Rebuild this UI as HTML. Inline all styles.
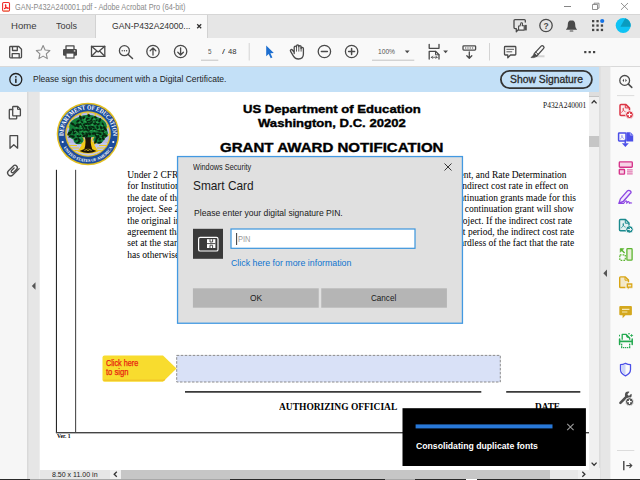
<!DOCTYPE html>
<html><head><meta charset="utf-8">
<style>
*{box-sizing:border-box;margin:0;padding:0}
html,body{width:640px;height:480px;overflow:hidden;background:#fff;font-family:"Liberation Sans",sans-serif;}
.a{position:absolute}
#root{position:relative;width:640px;height:480px;overflow:hidden;background:#fff}
.t{position:absolute;white-space:nowrap;line-height:1}
svg{position:absolute;overflow:visible}
.ic{fill:none;stroke:#4a4a4a;stroke-width:1.3;stroke-linecap:round;stroke-linejoin:round}
</style></head><body>
<div id="root">
<!-- title bar -->
<div class="a" style="left:0;top:0;width:640px;height:14px;background:#fff"></div>
<!-- tab bar -->
<div class="a" style="left:0;top:14px;width:640px;height:24px;background:#e6e6e6;border-top:1px solid #d6d6d6"></div>
<div class="a" style="left:95px;top:15px;width:112.5px;height:23px;background:#f9f9f9;border-left:1px solid #d2d2d2;border-right:1px solid #d2d2d2"></div>
<!-- toolbar -->
<div class="a" style="left:0;top:38px;width:640px;height:29px;background:#f9f9f9;border-bottom:1px solid #d9d9d9"></div>
<!-- info bar -->
<div class="a" style="left:0;top:67px;width:599.3px;height:25px;background:#c3e0f7"></div>
<svg style="left:499px;top:69px" width="96" height="22" viewBox="499 69 96 22"><rect x="500.9" y="70.8" width="91" height="17.4" rx="8.7" fill="none" stroke="#333" stroke-width="1.8"/></svg>
<!-- left panel -->
<div class="a" style="left:0;top:92px;width:27px;height:388px;background:#f6f6f6"></div>
<svg style="left:0;top:0" width="640" height="480" viewBox="0 0 640 480"><rect x="27" y="91.800" width="12.700" height="389" fill="#e6e6e6"/><rect x="27" y="91.800" width="1.500" height="389" fill="#d9d9d9"/></svg>
<!-- doc -->
<div class="a" id="doc" style="left:40px;top:92px;width:549px;height:378px;background:#fff"></div>
<!-- right scrollbar -->
<div class="a" style="left:589px;top:92px;width:10.5px;height:376px;background:#f0f0f0"></div>
<div class="a" style="left:589px;top:92px;width:10.3px;height:4.6px;background:#dedede;border-bottom:1px solid #c4c4c4"></div>
<div class="a" style="left:589px;top:136px;width:10.5px;height:11px;background:#c6c6c6"></div>
<!-- right strips -->
<svg style="left:0;top:0" width="640" height="480" viewBox="0 0 640 480"><rect x="599.300" y="66.700" width="11" height="414" fill="#e6e6e6"/><rect x="599.300" y="66.700" width="1.100" height="414" fill="#d6d6d6"/><rect x="610.300" y="66.700" width=".9" height="414" fill="#f0f0f0"/></svg>
<div class="a" style="left:611px;top:67px;width:29px;height:413px;background:#fafafa"></div>
<!-- bottom scrollbar -->
<div class="a" style="left:40px;top:470px;width:560px;height:10px;background:#e6e6e6"></div>
<div class="a" style="left:110px;top:470px;width:11px;height:9px;background:#f0f0f0"></div>
<div class="a" style="left:121px;top:470px;width:429px;height:9px;background:#c6c6c6"></div>
<div class="a" style="left:550px;top:470px;width:28px;height:9px;background:#e8e8e8"></div>
<div class="a" style="left:578px;top:470px;width:11px;height:9px;background:#f0f0f0"></div>
<div class="a" style="left:589px;top:468px;width:11px;height:12px;background:#f0f0f0"></div>
<!-- doc content -->
<svg style="left:0;top:0" width="640" height="480" viewBox="0 0 640 480">
 <rect x="55.9" y="169.8" width="1.1" height="263" fill="#262626"/>
 <rect x="75.05" y="169.8" width="1.1" height="263" fill="#4c4c4c"/>
 <rect x="55.9" y="432" width="533.1" height="1.4" fill="#444"/>
 <rect x="185" y="391.2" width="296.3" height="1.4" fill="#0a0a0a"/>
 <rect x="506.2" y="391.2" width="74.1" height="1.4" fill="#0a0a0a"/>
 <rect x="176.7" y="355.4" width="323.6" height="26.600" fill="#d9e1f7" stroke="#808080" stroke-width="0.9" stroke-dasharray="2.600 1.400"/>
 <g transform="translate(102.500,355.600)"><path d="M2 0H60.500L74 13L60.500 26.100H2Q0 26.100 0 24.100V2Q0 0 2 0Z" fill="#f8dc2e"/><path d="M1 24.600H61.200L62.300 23.600" stroke="#f2c628" stroke-width="1.500" fill="none"/></g>
</svg>
<div class="t" style="left:127.25px;top:171.14px;font-size:9.5px;font-family:'Liberation Serif',serif;color:#000">Under 2 CFR Part</div>
<div class="t" style="left:127.25px;top:182.49px;font-size:9.5px;font-family:'Liberation Serif',serif;color:#000">for Institutions of</div>
<div class="t" style="left:127.25px;top:193.84px;font-size:9.5px;font-family:'Liberation Serif',serif;color:#000">the date of the init</div>
<div class="t" style="left:127.25px;top:205.19px;font-size:9.5px;font-family:'Liberation Serif',serif;color:#000">project. See 2 CFR</div>
<div class="t" style="left:127.25px;top:216.54px;font-size:9.5px;font-family:'Liberation Serif',serif;color:#000">the original indirect</div>
<div class="t" style="left:127.25px;top:227.89px;font-size:9.5px;font-family:'Liberation Serif',serif;color:#000">agreement that is in</div>
<div class="t" style="left:127.25px;top:239.24px;font-size:9.5px;font-family:'Liberation Serif',serif;color:#000">set at the start of th</div>
<div class="t" style="left:127.25px;top:250.59px;font-size:9.5px;font-family:'Liberation Serif',serif;color:#000">has otherwise</div>
<div class="t" style="right:73.40px;top:171.14px;font-size:9.5px;font-family:'Liberation Serif',serif;color:#000">Identification and Assignment, and Rate Determination</div>
<div class="t" style="right:71.70px;top:182.49px;font-size:9.5px;font-family:'Liberation Serif',serif;color:#000">approves the indirect cost rate in effect on</div>
<div class="t" style="right:64.00px;top:193.84px;font-size:9.5px;font-family:'Liberation Serif',serif;color:#000">and any continuation grants made for this</div>
<div class="t" style="right:66.20px;top:205.19px;font-size:9.5px;font-family:'Liberation Serif',serif;color:#000">The GAN for a continuation grant will show</div>
<div class="t" style="right:68.00px;top:216.54px;font-size:9.5px;font-family:'Liberation Serif',serif;color:#000">entire project. If the indirect cost rate</div>
<div class="t" style="right:65.80px;top:227.89px;font-size:9.5px;font-family:'Liberation Serif',serif;color:#000">budget period, the indirect cost rate</div>
<div class="t" style="right:65.80px;top:239.24px;font-size:9.5px;font-family:'Liberation Serif',serif;color:#000">regardless of the fact that the rate</div>
<div class="t" id="title" style="left:14.50px;top:2.79px;font-size:8.4px;font-family:'Liberation Sans',sans-serif;font-weight:400;color:#8a8a8a;transform:scaleX(0.8782);transform-origin:0 0;">GAN-P432A240001.pdf - Adobe Acrobat Pro (64-bit)</div>
<div class="t" id="home" style="left:10.50px;top:21.42px;font-size:9.9px;font-family:'Liberation Sans',sans-serif;font-weight:400;color:#3a3a3a;transform:scaleX(0.9680);transform-origin:0 0;">Home</div>
<div class="t" id="tools" style="left:55.50px;top:21.42px;font-size:9.9px;font-family:'Liberation Sans',sans-serif;font-weight:400;color:#3a3a3a;transform:scaleX(0.9106);transform-origin:0 0;">Tools</div>
<div class="t" id="tabt" style="left:112.00px;top:22.33px;font-size:9.3px;font-family:'Liberation Sans',sans-serif;font-weight:400;color:#333;transform:scaleX(0.9261);transform-origin:0 0;">GAN-P432A24000...</div>
<div class="t" id="pg5" style="left:207.50px;top:47.83px;font-size:8px;font-family:'Liberation Sans',sans-serif;font-weight:400;color:#555;transform:scaleX(0.7860);transform-origin:0 0;">5</div>
<div class="t" id="pgs" style="left:222.00px;top:47.83px;font-size:8px;font-family:'Liberation Sans',sans-serif;font-weight:400;color:#333;transform:scaleX(1.3427);transform-origin:0 0;">/</div>
<div class="t" id="pg48" style="left:228.00px;top:47.83px;font-size:8px;font-family:'Liberation Sans',sans-serif;font-weight:400;color:#333;transform:scaleX(0.9544);transform-origin:0 0;">48</div>
<div class="t" id="z100" style="left:377.50px;top:47.83px;font-size:8px;font-family:'Liberation Sans',sans-serif;font-weight:400;color:#555;transform:scaleX(0.8305);transform-origin:0 0;">100%</div>
<div class="t" id="info" style="left:32.50px;top:75.48px;font-size:9px;font-family:'Liberation Sans',sans-serif;font-weight:400;color:#1f1f1f;transform:scaleX(0.9480);transform-origin:0 0;">Please sign this document with a Digital Certificate.</div>
<div class="t" id="showsig" style="left:509.50px;top:74.53px;font-size:10px;font-family:'Liberation Sans',sans-serif;font-weight:400;color:#2a2a2a;transform:scaleX(1.0339);transform-origin:0 0;-webkit-text-stroke:0.3px #2a2a2a;">Show Signature</div>
<div class="t" id="h1" style="left:242.75px;top:104.01px;font-size:10.5px;font-family:'Liberation Sans',sans-serif;font-weight:700;color:#000;transform:scaleX(1.2486);transform-origin:0 0;-webkit-text-stroke:0.35px #000;">US Department of Education</div>
<div class="t" id="h2" style="left:257.75px;top:117.71px;font-size:10.5px;font-family:'Liberation Sans',sans-serif;font-weight:700;color:#000;transform:scaleX(1.2454);transform-origin:0 0;-webkit-text-stroke:0.35px #000;">Washington, D.C. 20202</div>
<div class="t" id="h3" style="left:219.70px;top:141.99px;font-size:12.3px;font-family:'Liberation Sans',sans-serif;font-weight:700;color:#000;transform:scaleX(1.2254);transform-origin:0 0;-webkit-text-stroke:0.35px #000;">GRANT AWARD NOTIFICATION</div>
<div class="t" id="pnum" style="left:543.25px;top:101.00px;font-size:8.6px;font-family:'Liberation Serif',serif;font-weight:400;color:#111;transform:scaleX(0.8687);transform-origin:0 0;">P432A240001</div>
<div class="t" id="auth" style="left:279.25px;top:403.13px;font-size:9.4px;font-family:'Liberation Serif',serif;font-weight:700;color:#000;transform:scaleX(1.0111);transform-origin:0 0;">AUTHORIZING OFFICIAL</div>
<div class="t" id="date" style="left:535.30px;top:403.13px;font-size:9.4px;font-family:'Liberation Serif',serif;font-weight:700;color:#000;transform:scaleX(0.9858);transform-origin:0 0;">DATE</div>
<div class="t" id="ver" style="left:56.80px;top:433.11px;font-size:6.2px;font-family:'Liberation Serif',serif;font-weight:700;color:#000;transform:scaleX(0.8991);transform-origin:0 0;">Ver. 1</div>
<div class="t" id="click1" style="left:105.70px;top:358.72px;font-size:8.6px;font-family:'Liberation Sans',sans-serif;font-weight:400;color:#e81c10;transform:scaleX(0.8451);transform-origin:0 0;-webkit-text-stroke:0.25px #e81c10;">Click here</div>
<div class="t" id="click2" style="left:105.70px;top:367.72px;font-size:8.6px;font-family:'Liberation Sans',sans-serif;font-weight:400;color:#e81c10;transform:scaleX(0.8883);transform-origin:0 0;-webkit-text-stroke:0.25px #e81c10;">to sign</div>
<div class="t" id="dims" style="left:51.75px;top:470.83px;font-size:8px;font-family:'Liberation Sans',sans-serif;font-weight:400;color:#222;transform:scaleX(0.8778);transform-origin:0 0;">8.50 x 11.00 in</div>
<!-- window controls -->
<svg style="left:0;top:0" width="640" height="14" viewBox="0 0 640 14">
 <path d="M564 6.5h7" stroke="#777" stroke-width="0.9" fill="none"/>
 <path d="M592.5 4.5h5v5h-5zM594 4.5v-1.3h5v5h-1.5" stroke="#777" stroke-width="0.8" fill="none"/>
 <path d="M621 3l7 6.8M628 3l-7 6.8" stroke="#777" stroke-width="0.8" fill="none"/>
 <!-- app icon -->
 <rect x="2.6" y="2.5" width="6.9" height="8.6" rx="1.1" fill="#fff" stroke="#ee2e2e" stroke-width="1.1"/>
 <path d="M3.8 10.9h4.600" stroke="#e8a060" stroke-width=".8"/>
 <path d="M4 8.900c1.300-.6 2-2.500 2-3.800c0-.7-.7-.7-.7 0c0 1.400 1.300 3 2.700 3.300c.7.100.7-.6 0-.6c-1.400 0-2.900.5-4 1.100z" fill="#f41a1a" stroke="#f41a1a" stroke-width=".9"/>
</svg>
<!-- tab close -->
<svg style="left:197px;top:23.8px" width="4.4" height="4.4" viewBox="0 0 4.4 4.4"><path d="M0.2 0.2L4.2 4.2M4.2 0.2L0.2 4.2" stroke="#333" stroke-width="1.25"/></svg>
<!-- tabbar right icons -->
<svg style="left:0;top:14px" width="640" height="24" viewBox="0 14 640 24">
 <!-- feedback -->
 <g class="ic" stroke-width="1.300" stroke="#505050"><path d="M525.300 22v-1.400q0-1-1-1h-9.300q-1 0-1 1v7q0 1 1 1h1.300v3.200l3-3.200"/><path d="M518.600 26h1.400l1.100-3.300q1.500-.2 1.400 1.300l-.3 1.800h2v4.300h-5.600z" fill="#f2f2f2" stroke-width="1.100"/></g>
 <rect x="524.500" y="24.900" width="2.300" height="5.500" fill="#505050"/>
 <!-- help -->
 <circle cx="546" cy="25.500" r="6.200" class="ic" stroke-width="1.200"/>
 <text x="546" y="28.600" font-size="8.500" font-weight="700" text-anchor="middle" fill="#4a4a4a" font-family="'Liberation Sans',sans-serif">?</text>
 <!-- bell -->
 <path d="M571.500 20.200c-2.600 0-3.700 2-3.700 4.200c0 2.600-.7 3.800-1.700 4.800v.6h10.800v-.6c-1-1-1.700-2.200-1.700-4.800c0-2.200-1.100-4.200-3.700-4.200z" fill="#4a4a4a"/>
 <path d="M570.200 31h2.600" stroke="#4a4a4a" stroke-width="1.200" stroke-linecap="round"/>
 <!-- grid -->
 <g fill="#444"><rect x="592" y="20" width="2.300" height="2.300"/><rect x="596.400" y="20" width="2.300" height="2.300"/>
 <rect x="592" y="24.400" width="2.300" height="2.300"/><rect x="596.400" y="24.400" width="2.300" height="2.300"/><rect x="600.800" y="24.400" width="2.300" height="2.300"/>
 <rect x="592" y="28.800" width="2.300" height="2.300"/><rect x="596.400" y="28.800" width="2.300" height="2.300"/><rect x="600.800" y="28.800" width="2.300" height="2.300"/></g>
 <circle cx="602.200" cy="21" r="2.100" fill="#1473e6"/>
 <!-- avatar -->
 <circle cx="623.200" cy="25.500" r="7.500" fill="#0fc3f4"/>
 <path d="M620.4 26.8 L625.2 18.3 A7.5 7.5 0 0 1 630.6 26.8 Z" fill="#0a9bbf"/>
</svg>
<!-- toolbar icons -->
<svg style="left:0;top:38px" width="640" height="29" viewBox="0 38 640 29">
 <!-- save -->
 <g class="ic"><path d="M10.500 46.500h8.300l2.700 2.700v7.800q0 .8-.8.800h-10.200q-.8 0-.8-.8v-9.700q0-.8.800-.8z"/><path d="M12.500 46.800v3.700h4.800v-3.700"/><path d="M12.200 57.600v-4h7v4"/></g>
 <!-- star -->
 <path d="M43.100 45.500l2 4.500l4.800.500l-3.600 3.300l1 4.800l-4.200-2.500l-4.200 2.500l1-4.800l-3.600-3.300l4.800-.5z" fill="none" stroke="#8c8c8c" stroke-width="1.100" stroke-linejoin="round"/>
 <!-- print -->
 <g><path d="M66 49v-3.100h8v3.100" class="ic"/><rect x="63" y="49" width="14" height="6.800" rx="1.200" fill="#4a4a4a"/><rect x="66" y="53" width="8" height="5" fill="#f9f9f9" stroke="#4a4a4a" stroke-width="1.200"/><rect x="73.800" y="50.300" width="1.500" height="1.200" fill="#f9f9f9"/></g>
 <!-- mail -->
 <g class="ic" stroke-width="1.050" stroke="#555"><rect x="91.500" y="46.300" width="13.300" height="10"/><path d="M91.500 46.300l6.650 5.600l6.650-5.600M91.500 56.300l5-5M104.800 56.300l-5-5"/></g>
 <!-- find -->
 <g class="ic"><circle cx="124.400" cy="50.700" r="5"/><path d="M128.200 54.500l4.300 4" stroke-width="1.500"/></g>
 <g fill="#4a4a4a"><circle cx="122.200" cy="50.700" r=".7"/><circle cx="124.400" cy="50.700" r=".7"/><circle cx="126.600" cy="50.700" r=".7"/></g>
 <!-- up -->
 <g class="ic"><circle cx="153" cy="51.500" r="6.200"/><path d="M153 55v-6.800M150.200 50.800l2.800-2.800l2.800 2.800"/></g>
 <!-- down -->
 <g class="ic"><circle cx="180.600" cy="51.500" r="6.200"/><path d="M180.600 48v6.800M177.800 52.200l2.800 2.800l2.800-2.800"/></g>
 <!-- page underline -->
 <path d="M201 60.200h17.300" stroke="#c2c2c2" stroke-width="1"/>
 <path d="M249.200 43v17.500" stroke="#d4d4d4" stroke-width="1"/>
 <!-- cursor -->
 <path d="M266.200 45.400v10.800l2.500-2.200l2 4.300l1.700-.8l-2-4.200l3.400-.3z" fill="#1e6fd0"/>
 <!-- hand -->
 <g class="ic" stroke-width="1.100"><path d="M294.200 53.600V47.200a1.150 1.150 0 0 1 2.300 0V46a1.150 1.150 0 0 1 2.300 0V46.700a1.150 1.150 0 0 1 2.300 0V48.600a1.150 1.150 0 0 1 2.300 0V54q0 5-5 5q-3.200 0-4.800-2.700l-3-5q-.6-1 .2-1.600t1.600 .3l1.800 2.400"/><path d="M296.500 47.200v4M298.800 46.200v5M301.100 47v4.200" stroke-width=".9"/></g>
 <!-- zoom out -->
 <g class="ic"><circle cx="324.400" cy="51.500" r="6.200"/><path d="M321.400 51.500h6" stroke-width="1.500"/></g>
 <!-- zoom in -->
 <g class="ic"><circle cx="351.600" cy="51.500" r="6.200"/><path d="M348.600 51.500h6M351.600 48.500v6" stroke-width="1.500"/></g>
 <!-- zoom underline + caret -->
 <path d="M372 60.200h42.300" stroke="#c2c2c2" stroke-width="1"/>
 <path d="M404.800 50.600h4.800l-2.400 2.600z" fill="#4a4a4a"/>
 <!-- fit page -->
 <g class="ic" stroke-width="1.300"><path d="M429.200 44.300v4h9.800v-4"/><path d="M429.200 59v-7.700h6.300l3.500 3.500v4.200"/><path d="M435.500 51.300v3.500h3.500" stroke-width="1"/><path d="M431.500 57.300h5.500M431.500 57.300l1.200-1.200M431.500 57.300l1.200 1.200M437 57.300l-1.200-1.200M437 57.300l-1.200 1.200" stroke-width=".8"/></g>
 <path d="M443.200 50.600h4.800l-2.400 2.600z" fill="#4a4a4a"/>
 <!-- keyboard down -->
 <g class="ic"><rect x="463" y="45.800" width="12.600" height="4.300" rx=".8"/><path d="M469.300 52v6M466.800 55.700l2.500 2.500l2.500-2.500"/></g>
 <g fill="#4a4a4a"><rect x="465" y="47.500" width="1.300" height="1"/><rect x="467.300" y="47.500" width="1.300" height="1"/><rect x="469.600" y="47.500" width="1.300" height="1"/><rect x="471.900" y="47.500" width="1.300" height="1"/></g>
 <path d="M489.500 43v17.500" stroke="#d4d4d4" stroke-width="1"/>
 <!-- comment -->
 <g class="ic" stroke-width="1.200"><path d="M505.300 46.500h9.700q.8 0 .8.800v6.900q0 .8-.8.800h-4.500l-2.700 2.700v-2.700h-2.500q-.8 0-.8-.8v-6.900q0-.8.800-.8z"/><path d="M506.800 49.300h6.800M506.800 51.800h5" stroke-width=".9"/></g>
 <!-- highlighter -->
 <path d="M534.800 56.300h9.700" stroke="#d2d2d2" stroke-width="2"/>
 <g class="ic" stroke-width="1.150"><path d="M536.750 55.950L534.250 53.650L541.150 46.100q1-1.100 2.250 .050t.25 2.250z" fill="#f9f9f9"/><path d="M538.250 54.350L535.750 52.050" stroke-width="1"/><path d="M536.750 55.950L534.250 53.650L533 55.600L531 57.600H533.800L535.200 57.100z" fill="#4a4a4a" stroke-width=".7"/></g>
 <!-- more -->
 <g fill="#444"><rect x="584.200" y="51" width="2.200" height="2.200"/><rect x="588.600" y="51" width="2.200" height="2.200"/><rect x="593" y="51" width="2.200" height="2.200"/></g>
</svg>
<!-- info icon -->
<svg style="left:0;top:67px" width="40" height="25" viewBox="0 67 40 25">
 <circle cx="15.800" cy="79.500" r="6" fill="none" stroke="#222" stroke-width="1.300"/>
 <rect x="15.100" y="78.600" width="1.500" height="4.300" fill="#222"/><rect x="15.100" y="76.100" width="1.500" height="1.500" fill="#222"/>
</svg>
<!-- left panel icons -->
<svg style="left:0;top:92px" width="40" height="388" viewBox="0 92 40 388">
 <g class="ic" stroke-width="1.250"><path d="M12.700 109.500h-2.700q-.7 0-.7.700v8q0 .7.700.7h6q.7 0 .7-.7v-2"/><path d="M13.400 106.500h4.300l2.700 2.700v6q0 .7-.7.700h-6.300q-.7 0-.7-.7v-8q0-.7.700-.7z"/><path d="M17.500 106.700v2.700h2.700" stroke-width="1"/></g>
 <path d="M10 135.600h7.600v12.600l-3.800-3.400l-3.800 3.400z" class="ic" stroke-width="1.300"/>
 <path d="M5.4 3L-3.6 3A3 3 0 0 1 -3.6 -3L3.2 -3A2.3 2.3 0 0 1 3.2 1.6L-1.3 1.6A1.3 1.3 0 0 1 -1.3 -1L2.2 -1" class="ic" stroke-width="1.3" transform="translate(13.2,170.3) rotate(-45)"/>
 <path d="M31.800 286l3.700-3.700v7.400z" fill="#555"/>
</svg>
<!-- scrollbar arrows -->
<svg style="left:580px;top:92px" width="30" height="388" viewBox="580 92 30 388">
 <path d="M591.600 103.400l2.500-2.600l2.500 2.600" fill="none" stroke="#333" stroke-width="1.300"/>
 <path d="M591.600 462.600l2.500 2.600l2.500-2.600" fill="none" stroke="#333" stroke-width="1.300"/>
 <path d="M582.300 471.800l2.600 2.500l-2.600 2.500" fill="none" stroke="#333" stroke-width="1.300"/>
 <path d="M603.300 273.200l3.700-3.700v7.400z" fill="#555"/>
</svg>
<svg style="left:110px;top:468px" width="12" height="12" viewBox="110 468 12 12"><path d="M116.800 471.800l-2.600 2.500l2.600 2.500" fill="none" stroke="#333" stroke-width="1.300"/></svg>
<!-- right panel icons -->
<svg style="left:611px;top:67px" width="29" height="413" viewBox="611 67 29 413">
 <!-- search -->
 <g class="ic" stroke="#444"><circle cx="624.700" cy="80.400" r="4.900"/><path d="M628.400 84.100l3.400 3.300" stroke-width="1.500"/></g>
 <path d="M624 78.800l-1.500 1.600l1.500 1.600zM625.400 78.800l1.500 1.600l-1.500 1.600z" fill="#444"/>
 <path d="M617 95.600h17.300" stroke="#dcdcdc" stroke-width="1"/>
 <!-- create pdf (red) -->
 <g fill="none" stroke="#dc3545" stroke-width="1.500" stroke-linejoin="round"><path d="M627 115.400h-6q-1 0-1-1v-8.800q0-1 1-1h5l3.500 3.500v2.300" fill="#fcecee"/><path d="M625.300 104.400v3.500h3.500" stroke-width="1"/><path d="M621.300 112.500c1.300-.6 2.300-2.600 2.300-3.900c0-.6-.7-.6-.7 0c0 1.400 1.300 2.900 2.700 3.300" stroke-width=".8"/></g>
 <circle cx="629.500" cy="114.700" r="3.900" fill="#dc3545" stroke="#fafafa" stroke-width=".9"/>
 <path d="M627.300 114.700h4.400M629.500 112.500v4.400" stroke="#fff" stroke-width="1.200"/>
 <!-- export pdf (blue) -->
 <g><path d="M619.200 132.900h6.200q.6 0 .6.600v6.800q0 .6-.6.600h-6.200q-.6 0-.6-.6v-6.800q0-.6.600-.6z" fill="#fafafa" stroke="#4b4fe8" stroke-width="1.500"/>
 <path d="M620.300 139c1.100-.5 1.900-2.200 1.900-3.300c0-.5-.5-.5-.5 0c0 1.200 1.100 2.400 2.200 2.800" fill="none" stroke="#8a8df0" stroke-width=".8"/>
 <path d="M626.600 132.200h3.800l2.800 2.800v6.600h-6.600z" fill="#4b4fe8"/><path d="M630.300 132.300v2.800h2.800" fill="none" stroke="#c9cbfa" stroke-width=".7"/>
 <path d="M625.300 139.500v4" stroke="#4b4fe8" stroke-width="1.600"/><path d="M625.300 139.500v2" stroke="#fafafa" stroke-width="2.800" opacity="0"/>
 <path d="M621.900 143.200h6.900l-3.450 3.900z" fill="#4b4fe8"/></g>
 <!-- organize (pink) -->
 <g stroke="#d6338a" stroke-width="1.35" fill="none"><rect x="619.3" y="161.9" width="13" height="5.3" rx=".8" fill="#f6d3e6"/><rect x="619.3" y="169.5" width="5.2" height="4.6" rx=".6" fill="#f6d3e6"/><path d="M627 169.9h5.7M627 171.9h5.7M627 173.9h5.7" stroke-width=".85"/></g>
 <!-- sign (purple) -->
 <g fill="none" stroke="#8c45e2" stroke-width="1.35" stroke-linecap="round" stroke-linejoin="round"><path d="M619 203.200L620.400 198.900L627.200 191.100Q628.900 189.600 630.400 191.100T630 193.700L623.200 201.500Z" fill="#f1e8fc"/><path d="M619 203.300h4.800q2-3.300 2.700-2.300t.2 2.200q1.500-2.200 2.200-1.400t.4 1.500q1-.8 2.300-.3" stroke-width="1.150"/></g>
 <!-- export (teal) -->
 <g fill="none" stroke="#1b8a8e" stroke-width="1.250" stroke-linejoin="round"><path d="M626 230.700h-5.500q-1 0-1-1v-9.200q0-1 1-1h5l3.500 3.500v3" fill="#e3f1f1" stroke-width="1.4"/><path d="M625.300 219.700v3.500h3.500" stroke-width="1"/><path d="M621.300 227.800c1.300-.6 2.300-2.600 2.300-3.900c0-.6-.7-.6-.7 0c0 1.400 1.300 2.900 2.700 3.300" stroke-width=".8"/></g>
 <circle cx="629.500" cy="229.400" r="3.700" fill="#1b8a8e" stroke="#fafafa" stroke-width=".8"/>
 <path d="M627.400 229.400h3.800M629.700 227.700l1.700 1.700l-1.700 1.700" stroke="#fff" stroke-width="1" fill="none"/>
 <!-- compress (green) -->
 <g fill="none" stroke="#5cb531" stroke-width="1.300"><rect x="626.900" y="248.700" width="5.200" height="11.500" rx=".8" fill="#e9efd9"/><path d="M619.800 254.800h5.500v5.500h-5.500z" stroke-dasharray="1.700 1.100" stroke-width="1.200"/><path d="M624.600 253l-4-4" stroke-width="1.300"/><path d="M620.200 252.300v-3.700h3.700z" fill="#5cb531" stroke-width=".6"/></g>
 <!-- comment on file (gold) -->
 <g fill="none" stroke="#d9a514" stroke-width="1.400" stroke-linejoin="round"><path d="M625.500 287.500h-5q-.8 0-.8-.8v-9q0-.8.800-.8h4.800l3.200 3.200v2.500" fill="#f3e8c8"/><path d="M625 277v3.200h3.200" stroke-width="1"/></g>
 <path d="M627 282.900h5q.8 0 .8.800v3.700q0 .8-.8.800h-2.800l-1.700 1.700v-1.700h-.5q-.8 0-.8-.8v-3.700q0-.8.800-.8z" fill="#d9a514" stroke="#fafafa" stroke-width=".7"/>
 <rect x="628" y="284.700" width="3.200" height="1.800" fill="#f3e8c8"/>
 <!-- comment (gold filled) -->
 <path d="M620.300 306h10.600q1 0 1 1v7.300q0 1-1 1h-5.400l-2.900 3v-3h-2.300q-1 0-1-1v-7.300q0-1 1-1z" fill="#d4a81e"/>
 <path d="M622 309.300h7.400M622 312h5.400" stroke="#f6e7b4" stroke-width="1.200"/>
 <!-- scan (green) -->
 <g fill="none" stroke="#22a94f" stroke-width="1.300" stroke-linejoin="round"><path d="M622.200 339.800v-5.400h4l3.500 3.500v1.900"/><path d="M626 334.600q0 3.500 3.500 3.500z" fill="#22a94f" stroke-width=".6"/><path d="M631.600 334v3M630.100 335.500h3M629 333v1.400M628.300 333.700h1.400" stroke-width=".8"/><path d="M619.500 334.800v1.600" stroke-width="1"/></g>
 <path d="M619.600 339v5.500M632.200 339v5.500" stroke="#22a94f" stroke-width="1.500" stroke-linecap="round"/>
 <path d="M619.600 341.400h12.600" stroke="#22a94f" stroke-width="1.700"/>
 <g fill="#22a94f"><rect x="621" y="343.700" width="1.300" height="1.300"/><rect x="621" y="345.500" width="1.300" height="1.300"/><rect x="629" y="343.700" width="1.300" height="1.300"/><rect x="629" y="345.500" width="1.300" height="1.300"/>
 <rect x="621" y="347" width="1.300" height="1.200"/><rect x="623" y="347" width="1.300" height="1.200"/><rect x="625" y="347" width="1.300" height="1.200"/><rect x="627" y="347" width="1.300" height="1.200"/><rect x="629" y="347" width="1.300" height="1.200"/></g>
 <!-- shield (blue) -->
 <path d="M625.500 363.300q2.500 1.300 5 1.300v5q0 4-5 6.300q-5-2.300-5-6.300v-5q2.500 0 5-1.300z" fill="#fafafa" stroke="#4b4fe8" stroke-width="1.300" stroke-linejoin="round"/>
 <path d="M625.500 364.200v10.800q-4.200-2-4.200-5.400v-4.300q2.200 0 4.200-1.100z" fill="#cdd5f8"/>
 <!-- wrench -->
 <path d="M620.400 402.800l5.800-5.800" stroke="#505050" stroke-width="2.500" stroke-linecap="round" fill="none"/>
 <circle cx="628.300" cy="394.900" r="3.400" fill="#505050"/>
 <path d="M628.300 394.900l1.200-1.200l4 .2l-4.200-4.200l.2 4z" fill="#fafafa" transform="rotate(0 628.300 394.900)"/>
 <path d="M628.100 395.100l5-5" stroke="#fafafa" stroke-width="2.300"/>
 <circle cx="629.500" cy="401.700" r="4" fill="#505050" stroke="#fafafa" stroke-width=".9"/>
 <path d="M627.300 401.700h4.400M629.500 399.500v4.400" stroke="#fff" stroke-width="1.200"/>
 <!-- bottom -->
 <path d="M617 450.500h17.300" stroke="#dcdcdc" stroke-width="1"/>
 <path d="M623.800 461v9.300" stroke="#444" stroke-width="1.400"/>
 <path d="M626.300 465.600h5.500M629.500 463.300l2.300 2.300l-2.300 2.300" stroke="#444" stroke-width="1.100" fill="none"/>
</svg>
<!-- bottom edge line -->
<div class="a" style="left:0;top:479px;width:640px;height:1px;background:#2a2a2a"></div>
<div class="a" style="left:30px;top:479px;width:200px;height:1px;background:#a8a8a8"></div>
<div class="a" style="left:385px;top:479px;width:30px;height:1px;background:#a8a8a8"></div>
<div class="a" style="left:466px;top:479px;width:11px;height:1px;background:#fff"></div>
<!-- seal -->
<svg style="left:56px;top:102px" width="64" height="64" viewBox="-32 -32 64 64">
 <defs>
  <path id="arcT" d="M-24.47 2.57 A24.6 24.6 0 1 1 24.47 2.57"/>
  <path id="arcB" d="M-24.72 13.15 A28.0 28.0 0 0 0 24.72 13.15"/>
  <clipPath id="inner"><circle r="21.500"/></clipPath>
 </defs>
 <circle r="31.300" fill="#e3bf1f"/>
 <circle r="29.800" fill="#1c4c9c"/>
 <circle r="22.800" fill="#e3bf1f"/>
 <circle r="21.500" fill="#b7bbe6"/>
 <g clip-path="url(#inner)">
  <g stroke="#ecca22" stroke-width="1.600">
   <path d="M0 14L-24 8M0 14L-23 -1M0 14L-22 -10M0 14L-16 -18M0 14L-8 -22M0 14L0 -24M0 14L8 -22M0 14L16 -18M0 14L22 -10M0 14L23 -1M0 14L24 8"/>
  </g>
  <path d="M-24 9.500 Q-12 7 -4 12 L4 12 Q12 7 24 9.500 L24 24 L-24 24Z" fill="#c3c7ee"/>
  <path d="M-22 11.500h11M-23 14h14M-22 16.500h13M11 11.500h11M9 14h14M9 16.500h13" stroke="#ecca22" stroke-width="1.100"/>
  <path d="M-10.500 17.500 L-3 6 L3 6 L10.500 17.500 Q0 22 -10.500 17.500Z" fill="#f4c915"/>
  <path d="M-8.500 17 Q0 12.500 8.500 17 Q0 21 -8.500 17Z" fill="#1a1408"/>
  <path d="M-3.500 16.500q1.700-2 3.500 0q1.800-2 3.500 0" stroke="#e9c81e" stroke-width=".9" fill="none"/>
 </g>
 <path d="M-3.800 15.500 Q-1.200 8 -3.500 2 L-9 -4 L-6 -4 L-2 -.5 L-1 -6 L1.500 -6 L1.500 0 L6 -4 L8.500 -3 L3.200 2.500 Q1.800 8 4.300 15.500 Q0 14 -3.800 15.500Z" fill="#20130a"/>
 <g fill="#13803a">
  <ellipse cx="0" cy="-7.500" rx="18.800" ry="10.800"/>
  <ellipse cx="-12.500" cy="-1" rx="7.500" ry="6.800"/>
  <ellipse cx="12.500" cy="-1" rx="7.500" ry="6.800"/>
  <ellipse cx="-9.500" cy="6" rx="5" ry="4.200"/>
  <ellipse cx="10.500" cy="5.500" rx="5.200" ry="4"/>
  <ellipse cx="0" cy="-13" rx="11.500" ry="6.300"/>
 </g>
 <g fill="#06180b" opacity=".85"><ellipse cx="0.8" cy="-18.5" rx="1.5" ry="1.3" transform="rotate(27 0.8 -18.5)"/><ellipse cx="-7.5" cy="-16.4" rx="2.5" ry="1.2" transform="rotate(70 -7.5 -16.4)"/><ellipse cx="-4.2" cy="-16.4" rx="1.6" ry="1.2" transform="rotate(-30 -4.2 -16.4)"/><ellipse cx="-0.8" cy="-15.3" rx="2.5" ry="1.0" transform="rotate(-4 -0.8 -15.3)"/><ellipse cx="4.3" cy="-15.6" rx="1.7" ry="0.9" transform="rotate(-53 4.3 -15.6)"/><ellipse cx="7.5" cy="-16.6" rx="1.6" ry="1.0" transform="rotate(20 7.5 -16.6)"/><ellipse cx="-10.0" cy="-12.9" rx="2.1" ry="1.0" transform="rotate(-36 -10.0 -12.9)"/><ellipse cx="-6.3" cy="-12.3" rx="1.7" ry="0.9" transform="rotate(44 -6.3 -12.3)"/><ellipse cx="-1.1" cy="-13.5" rx="2.4" ry="1.1" transform="rotate(63 -1.1 -13.5)"/><ellipse cx="1.1" cy="-12.5" rx="1.8" ry="0.9" transform="rotate(14 1.1 -12.5)"/><ellipse cx="4.3" cy="-13.4" rx="2.4" ry="1.1" transform="rotate(8 4.3 -13.4)"/><ellipse cx="7.9" cy="-13.5" rx="2.1" ry="0.9" transform="rotate(-18 7.9 -13.5)"/><ellipse cx="11.7" cy="-13.7" rx="2.4" ry="1.2" transform="rotate(-67 11.7 -13.7)"/><ellipse cx="-15.4" cy="-9.9" rx="2.4" ry="1.2" transform="rotate(33 -15.4 -9.9)"/><ellipse cx="-10.4" cy="-9.3" rx="2.2" ry="1.3" transform="rotate(-21 -10.4 -9.3)"/><ellipse cx="-7.6" cy="-9.5" rx="2.1" ry="1.1" transform="rotate(51 -7.6 -9.5)"/><ellipse cx="-3.0" cy="-9.6" rx="2.2" ry="1.1" transform="rotate(-16 -3.0 -9.6)"/><ellipse cx="-0.2" cy="-10.4" rx="2.0" ry="1.1" transform="rotate(28 -0.2 -10.4)"/><ellipse cx="2.9" cy="-10.8" rx="2.2" ry="0.9" transform="rotate(-28 2.9 -10.8)"/><ellipse cx="7.3" cy="-10.5" rx="2.3" ry="1.3" transform="rotate(-10 7.3 -10.5)"/><ellipse cx="10.4" cy="-9.9" rx="1.6" ry="1.0" transform="rotate(-26 10.4 -9.9)"/><ellipse cx="14.9" cy="-9.7" rx="1.8" ry="0.9" transform="rotate(63 14.9 -9.7)"/><ellipse cx="-12.1" cy="-7.7" rx="2.1" ry="1.0" transform="rotate(29 -12.1 -7.7)"/><ellipse cx="-10.2" cy="-7.6" rx="1.5" ry="1.2" transform="rotate(-6 -10.2 -7.6)"/><ellipse cx="-5.3" cy="-6.5" rx="2.2" ry="0.9" transform="rotate(64 -5.3 -6.5)"/><ellipse cx="-2.5" cy="-7.2" rx="2.0" ry="1.1" transform="rotate(28 -2.5 -7.2)"/><ellipse cx="1.4" cy="-6.5" rx="1.6" ry="1.3" transform="rotate(57 1.4 -6.5)"/><ellipse cx="4.5" cy="-7.1" rx="2.4" ry="1.0" transform="rotate(18 4.5 -7.1)"/><ellipse cx="9.6" cy="-6.5" rx="2.0" ry="1.1" transform="rotate(62 9.6 -6.5)"/><ellipse cx="13.2" cy="-6.2" rx="2.0" ry="1.2" transform="rotate(67 13.2 -6.2)"/><ellipse cx="16.1" cy="-6.6" rx="1.5" ry="1.2" transform="rotate(-2 16.1 -6.6)"/><ellipse cx="-14.6" cy="-3.6" rx="2.2" ry="1.3" transform="rotate(48 -14.6 -3.6)"/><ellipse cx="-10.5" cy="-3.8" rx="2.3" ry="1.1" transform="rotate(3 -10.5 -3.8)"/><ellipse cx="-6.5" cy="-4.0" rx="1.7" ry="1.1" transform="rotate(10 -6.5 -4.0)"/><ellipse cx="-3.2" cy="-3.9" rx="2.2" ry="0.8" transform="rotate(-1 -3.2 -3.9)"/><ellipse cx="-0.9" cy="-4.1" rx="2.4" ry="1.0" transform="rotate(44 -0.9 -4.1)"/><ellipse cx="2.4" cy="-4.5" rx="2.2" ry="1.0" transform="rotate(-38 2.4 -4.5)"/><ellipse cx="6.5" cy="-4.5" rx="1.9" ry="1.0" transform="rotate(4 6.5 -4.5)"/><ellipse cx="10.7" cy="-3.4" rx="2.4" ry="0.9" transform="rotate(16 10.7 -3.4)"/><ellipse cx="14.8" cy="-3.4" rx="1.8" ry="1.3" transform="rotate(-26 14.8 -3.4)"/><ellipse cx="17.3" cy="-4.6" rx="1.9" ry="1.2" transform="rotate(47 17.3 -4.6)"/><ellipse cx="-19.2" cy="-0.3" rx="2.0" ry="1.2" transform="rotate(-54 -19.2 -0.3)"/><ellipse cx="-17.3" cy="-1.6" rx="2.1" ry="1.1" transform="rotate(-65 -17.3 -1.6)"/><ellipse cx="-13.5" cy="-1.5" rx="2.3" ry="1.3" transform="rotate(-41 -13.5 -1.5)"/><ellipse cx="-10.0" cy="-1.7" rx="2.0" ry="1.2" transform="rotate(63 -10.0 -1.7)"/><ellipse cx="-5.2" cy="-0.4" rx="2.0" ry="1.2" transform="rotate(-45 -5.2 -0.4)"/><ellipse cx="-1.4" cy="-0.7" rx="2.1" ry="1.0" transform="rotate(51 -1.4 -0.7)"/><ellipse cx="1.6" cy="-0.2" rx="1.8" ry="1.3" transform="rotate(43 1.6 -0.2)"/><ellipse cx="5.8" cy="-0.5" rx="2.4" ry="1.2" transform="rotate(-13 5.8 -0.5)"/><ellipse cx="9.3" cy="-0.6" rx="2.2" ry="0.8" transform="rotate(-13 9.3 -0.6)"/><ellipse cx="11.9" cy="-0.3" rx="1.8" ry="1.1" transform="rotate(23 11.9 -0.3)"/><ellipse cx="16.1" cy="-1.2" rx="2.1" ry="1.2" transform="rotate(70 16.1 -1.2)"/><ellipse cx="-18.0" cy="2.4" rx="1.9" ry="0.8" transform="rotate(-34 -18.0 2.4)"/><ellipse cx="-15.1" cy="2.6" rx="2.0" ry="1.3" transform="rotate(7 -15.1 2.6)"/><ellipse cx="-10.0" cy="2.2" rx="1.6" ry="1.1" transform="rotate(43 -10.0 2.2)"/><ellipse cx="-8.3" cy="2.7" rx="2.0" ry="0.9" transform="rotate(-48 -8.3 2.7)"/><ellipse cx="-3.6" cy="1.8" rx="2.2" ry="1.1" transform="rotate(-30 -3.6 1.8)"/><ellipse cx="-1.2" cy="1.6" rx="1.7" ry="1.2" transform="rotate(-64 -1.2 1.6)"/><ellipse cx="7.9" cy="1.3" rx="1.9" ry="1.0" transform="rotate(57 7.9 1.3)"/><ellipse cx="10.1" cy="2.0" rx="2.2" ry="1.0" transform="rotate(61 10.1 2.0)"/><ellipse cx="14.8" cy="2.2" rx="2.1" ry="1.0" transform="rotate(-54 14.8 2.2)"/><ellipse cx="17.7" cy="1.6" rx="1.9" ry="1.2" transform="rotate(12 17.7 1.6)"/><ellipse cx="-12.2" cy="5.2" rx="1.8" ry="1.1" transform="rotate(-20 -12.2 5.2)"/><ellipse cx="-9.0" cy="5.2" rx="1.7" ry="0.9" transform="rotate(35 -9.0 5.2)"/><ellipse cx="8.9" cy="4.3" rx="2.2" ry="1.1" transform="rotate(-58 8.9 4.3)"/><ellipse cx="12.1" cy="5.0" rx="1.8" ry="1.2" transform="rotate(-41 12.1 5.0)"/><ellipse cx="15.1" cy="4.4" rx="2.1" ry="1.2" transform="rotate(43 15.1 4.4)"/><ellipse cx="-10.5" cy="8.7" rx="1.9" ry="0.8" transform="rotate(-10 -10.5 8.7)"/><ellipse cx="-8.2" cy="7.3" rx="2.0" ry="1.1" transform="rotate(9 -8.2 7.3)"/><ellipse cx="7.5" cy="7.8" rx="2.2" ry="1.1" transform="rotate(-54 7.5 7.8)"/><ellipse cx="11.5" cy="8.7" rx="2.3" ry="1.0" transform="rotate(-9 11.5 8.7)"/></g>
 <g fill="#2fae55" opacity=".8"><ellipse cx="-2.9" cy="-15.0" rx="1.7" ry="0.8" transform="rotate(-60 -2.9 -15.0)"/><ellipse cx="-0.3" cy="-13.6" rx="1.2" ry="0.5" transform="rotate(-20 -0.3 -13.6)"/><ellipse cx="5.4" cy="-14.4" rx="1.4" ry="0.7" transform="rotate(-37 5.4 -14.4)"/><ellipse cx="6.6" cy="-14.6" rx="1.6" ry="0.6" transform="rotate(46 6.6 -14.6)"/><ellipse cx="-8.4" cy="-11.4" rx="1.4" ry="0.8" transform="rotate(-38 -8.4 -11.4)"/><ellipse cx="-2.5" cy="-12.4" rx="1.7" ry="0.6" transform="rotate(25 -2.5 -12.4)"/><ellipse cx="5.8" cy="-12.2" rx="1.0" ry="0.6" transform="rotate(-7 5.8 -12.2)"/><ellipse cx="9.3" cy="-11.5" rx="1.5" ry="0.8" transform="rotate(10 9.3 -11.5)"/><ellipse cx="-7.3" cy="-7.9" rx="1.1" ry="0.8" transform="rotate(59 -7.3 -7.9)"/><ellipse cx="-1.8" cy="-8.6" rx="1.5" ry="0.5" transform="rotate(12 -1.8 -8.6)"/><ellipse cx="4.4" cy="-9.1" rx="1.3" ry="0.9" transform="rotate(-21 4.4 -9.1)"/><ellipse cx="14.1" cy="-8.4" rx="1.3" ry="0.8" transform="rotate(-1 14.1 -8.4)"/><ellipse cx="-11.5" cy="-6.5" rx="1.4" ry="0.7" transform="rotate(16 -11.5 -6.5)"/><ellipse cx="-6.4" cy="-5.5" rx="1.3" ry="0.8" transform="rotate(-39 -6.4 -5.5)"/><ellipse cx="10.4" cy="-4.7" rx="1.4" ry="0.8" transform="rotate(-34 10.4 -4.7)"/><ellipse cx="14.7" cy="-4.4" rx="1.2" ry="0.5" transform="rotate(-7 14.7 -4.4)"/><ellipse cx="-12.9" cy="-2.6" rx="1.2" ry="0.7" transform="rotate(-25 -12.9 -2.6)"/><ellipse cx="-11.0" cy="-1.9" rx="1.6" ry="0.6" transform="rotate(42 -11.0 -1.9)"/><ellipse cx="-6.1" cy="-2.9" rx="1.7" ry="0.7" transform="rotate(-12 -6.1 -2.9)"/><ellipse cx="-3.5" cy="-1.9" rx="1.6" ry="0.6" transform="rotate(-3 -3.5 -1.9)"/><ellipse cx="-2.1" cy="-2.5" rx="1.6" ry="0.6" transform="rotate(34 -2.1 -2.5)"/><ellipse cx="2.9" cy="-3.4" rx="1.5" ry="0.5" transform="rotate(1 2.9 -3.4)"/><ellipse cx="6.6" cy="-3.3" rx="1.1" ry="0.8" transform="rotate(17 6.6 -3.3)"/><ellipse cx="16.6" cy="-1.5" rx="1.1" ry="0.6" transform="rotate(27 16.6 -1.5)"/><ellipse cx="17.0" cy="-3.0" rx="1.0" ry="0.6" transform="rotate(22 17.0 -3.0)"/><ellipse cx="-10.1" cy="-0.2" rx="1.3" ry="0.7" transform="rotate(-58 -10.1 -0.2)"/><ellipse cx="-6.3" cy="0.7" rx="1.4" ry="0.5" transform="rotate(47 -6.3 0.7)"/><ellipse cx="9.2" cy="0.4" rx="1.2" ry="0.8" transform="rotate(15 9.2 0.4)"/><ellipse cx="-7.9" cy="3.7" rx="1.7" ry="0.7" transform="rotate(3 -7.9 3.7)"/><ellipse cx="13.2" cy="3.7" rx="1.1" ry="0.7" transform="rotate(20 13.2 3.7)"/><ellipse cx="-7.3" cy="8.4" rx="1.1" ry="0.8" transform="rotate(-50 -7.3 8.4)"/></g>
 <text font-family="'Liberation Serif',serif" font-size="6.400" font-weight="700" fill="#fff" textLength="80.9" lengthAdjust="spacingAndGlyphs"><textPath href="#arcT" startOffset="0.7" textLength="80.9" lengthAdjust="spacingAndGlyphs">DEPARTMENT OF EDUCATION</textPath></text>
 <text font-family="'Liberation Serif',serif" font-size="4.300" font-weight="700" fill="#fff" textLength="59.6" lengthAdjust="spacingAndGlyphs"><textPath href="#arcB" startOffset="0.5" textLength="59.6" lengthAdjust="spacingAndGlyphs">UNITED STATES OF AMERICA</textPath></text>
 <circle cx="-25.300" cy="8" r="1.100" fill="#fff"/><circle cx="25.300" cy="8" r="1.100" fill="#fff"/>
</svg>

<!-- toast -->
<svg style="left:0;top:0" width="640" height="480" viewBox="0 0 640 480">
 <rect x="402.5" y="408.2" width="183.4" height="57.8" fill="#000"/>
 <rect x="415.6" y="424.4" width="136.9" height="4" fill="#2878d8"/>
 <path d="M567.2 423.800l6.400 6.400M573.600 423.800l-6.400 6.400" stroke="#9a9a9a" stroke-width="1.100"/>
</svg>
<!-- dialog -->
<svg style="left:0;top:0" width="640" height="480" viewBox="0 0 640 480">
 <rect x="177.55" y="156.55" width="284.9" height="166.7" fill="#e0e0e0" stroke="#4399e2" stroke-width="1.3"/>
 <rect x="193" y="228.8" width="30" height="30" fill="#3a3a3a"/>
 <rect x="231" y="229" width="184" height="19.3" fill="#fff" stroke="#3a94dc" stroke-width="1.2"/>
 <rect x="236.2" y="233" width="0.9" height="12" fill="#222"/>
 <rect x="192.9" y="288.3" width="125.85" height="19.4" fill="#b5b5b5"/>
 <rect x="321.25" y="288.3" width="125.65" height="19.4" fill="#b5b5b5"/>
 <path d="M444.5 163.5l7 7M451.5 163.5l-7 7" stroke="#222" stroke-width="0.9"/>
 <g transform="translate(198,236.800)"><rect x="0.6" y="0.6" width="19.4" height="13.6" rx="1.6" fill="none" stroke="#fff" stroke-width="1.2"/><rect x="9" y="2.4" width="8.4" height="8.8" fill="#fff"/><path d="M12 2.400v2.800h2.600v-2.800M12 11.200v-2.800h2.600v2.800M9 6.800h8.400" stroke="#3a3a3a" stroke-width="0.9" fill="none"/></g>
</svg>
<div class="t" id="toast" style="left:415.60px;top:442.22px;font-size:8.6px;font-family:'Liberation Sans',sans-serif;font-weight:700;color:#fff;transform:scaleX(1.0091);transform-origin:0 0;">Consolidating duplicate fonts</div>
<div class="t" id="ws" style="left:192.80px;top:162.52px;font-size:8.6px;font-family:'Liberation Sans',sans-serif;font-weight:400;color:#222;transform:scaleX(0.8522);transform-origin:0 0;">Windows Security</div>
<div class="t" id="sc" style="left:192.80px;top:179.96px;font-size:12.8px;font-family:'Liberation Sans',sans-serif;font-weight:400;color:#1a1a1a;transform:scaleX(0.9263);transform-origin:0 0;">Smart Card</div>
<div class="t" id="pl" style="left:193.75px;top:208.78px;font-size:9px;font-family:'Liberation Sans',sans-serif;font-weight:400;color:#1a1a1a;transform:scaleX(0.9530);transform-origin:0 0;">Please enter your digital signature PIN.</div>
<div class="t" id="pin" style="left:237.50px;top:235.22px;font-size:8.6px;font-family:'Liberation Sans',sans-serif;font-weight:400;color:#9a9a9a;transform:scaleX(0.8724);transform-origin:0 0;">PIN</div>
<div class="t" id="more" style="left:231.00px;top:259.38px;font-size:9px;font-family:'Liberation Sans',sans-serif;font-weight:400;color:#0f74cf;transform:scaleX(0.9785);transform-origin:0 0;">Click here for more information</div>
<div class="t" id="ok" style="left:249.70px;top:293.72px;font-size:8.6px;font-family:'Liberation Sans',sans-serif;font-weight:400;color:#1a1a1a;transform:scaleX(0.9821);transform-origin:0 0;">OK</div>
<div class="t" id="cancel" style="left:371.30px;top:293.72px;font-size:8.6px;font-family:'Liberation Sans',sans-serif;font-weight:400;color:#1a1a1a;transform:scaleX(0.9415);transform-origin:0 0;">Cancel</div>
</div>
</body></html>
